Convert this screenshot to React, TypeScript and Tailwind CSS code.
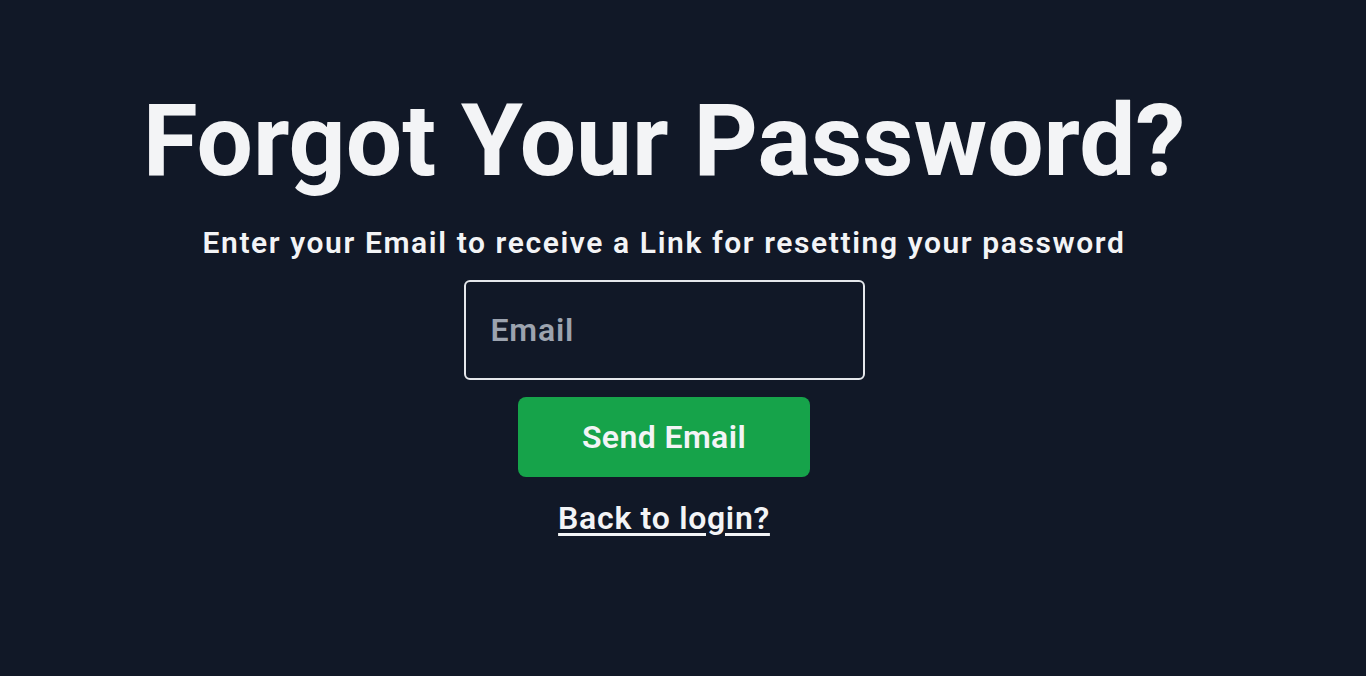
import { useState } from 'react'

const ForgotPassword = () => {
  const [email, setEmail] = useState('')

  return (
    <main className="min-h-[676px] w-full bg-[#111827] font-['Roboto',sans-serif]">
      <div className="flex w-[1328px] flex-col items-center pt-[91px]">
        <h1 className="text-[100px] font-bold leading-none text-[#f3f4f6]">
          Forgot Your Password?
        </h1>
        <p className="mt-[34px] text-[30px] font-semibold leading-[36px] tracking-[1.6px] text-[#f3f4f6]">
          Enter your Email to receive a Link for resetting your password
        </p>
        <form
          className="mt-[19px] flex flex-col items-center"
          onSubmit={(e) => e.preventDefault()}
        >
          <input
            type="email"
            value={email}
            onChange={(e) => setEmail(e.target.value)}
            placeholder="Email"
            className="h-[100px] w-[401px] rounded-md border-2 border-[#e5e7eb] bg-transparent px-[25px] text-[32px] font-semibold tracking-[0.8px] text-[#f3f4f6] outline-none placeholder:text-[#9ca3af]"
          />
          <button
            type="submit"
            className="mt-[17px] h-[80px] w-[292px] rounded-lg bg-[#16a34a] text-[32px] font-semibold tracking-[0.4px] text-[#f3f4f6]"
          >
            Send Email
          </button>
          <a
            href="#"
            className="mt-[21px] text-[32px] font-semibold leading-[40px] tracking-[0.7px] text-[#f3f4f6] underline underline-offset-4"
          >
            Back to login?
          </a>
        </form>
      </div>
    </main>
  )
}

export default ForgotPassword
